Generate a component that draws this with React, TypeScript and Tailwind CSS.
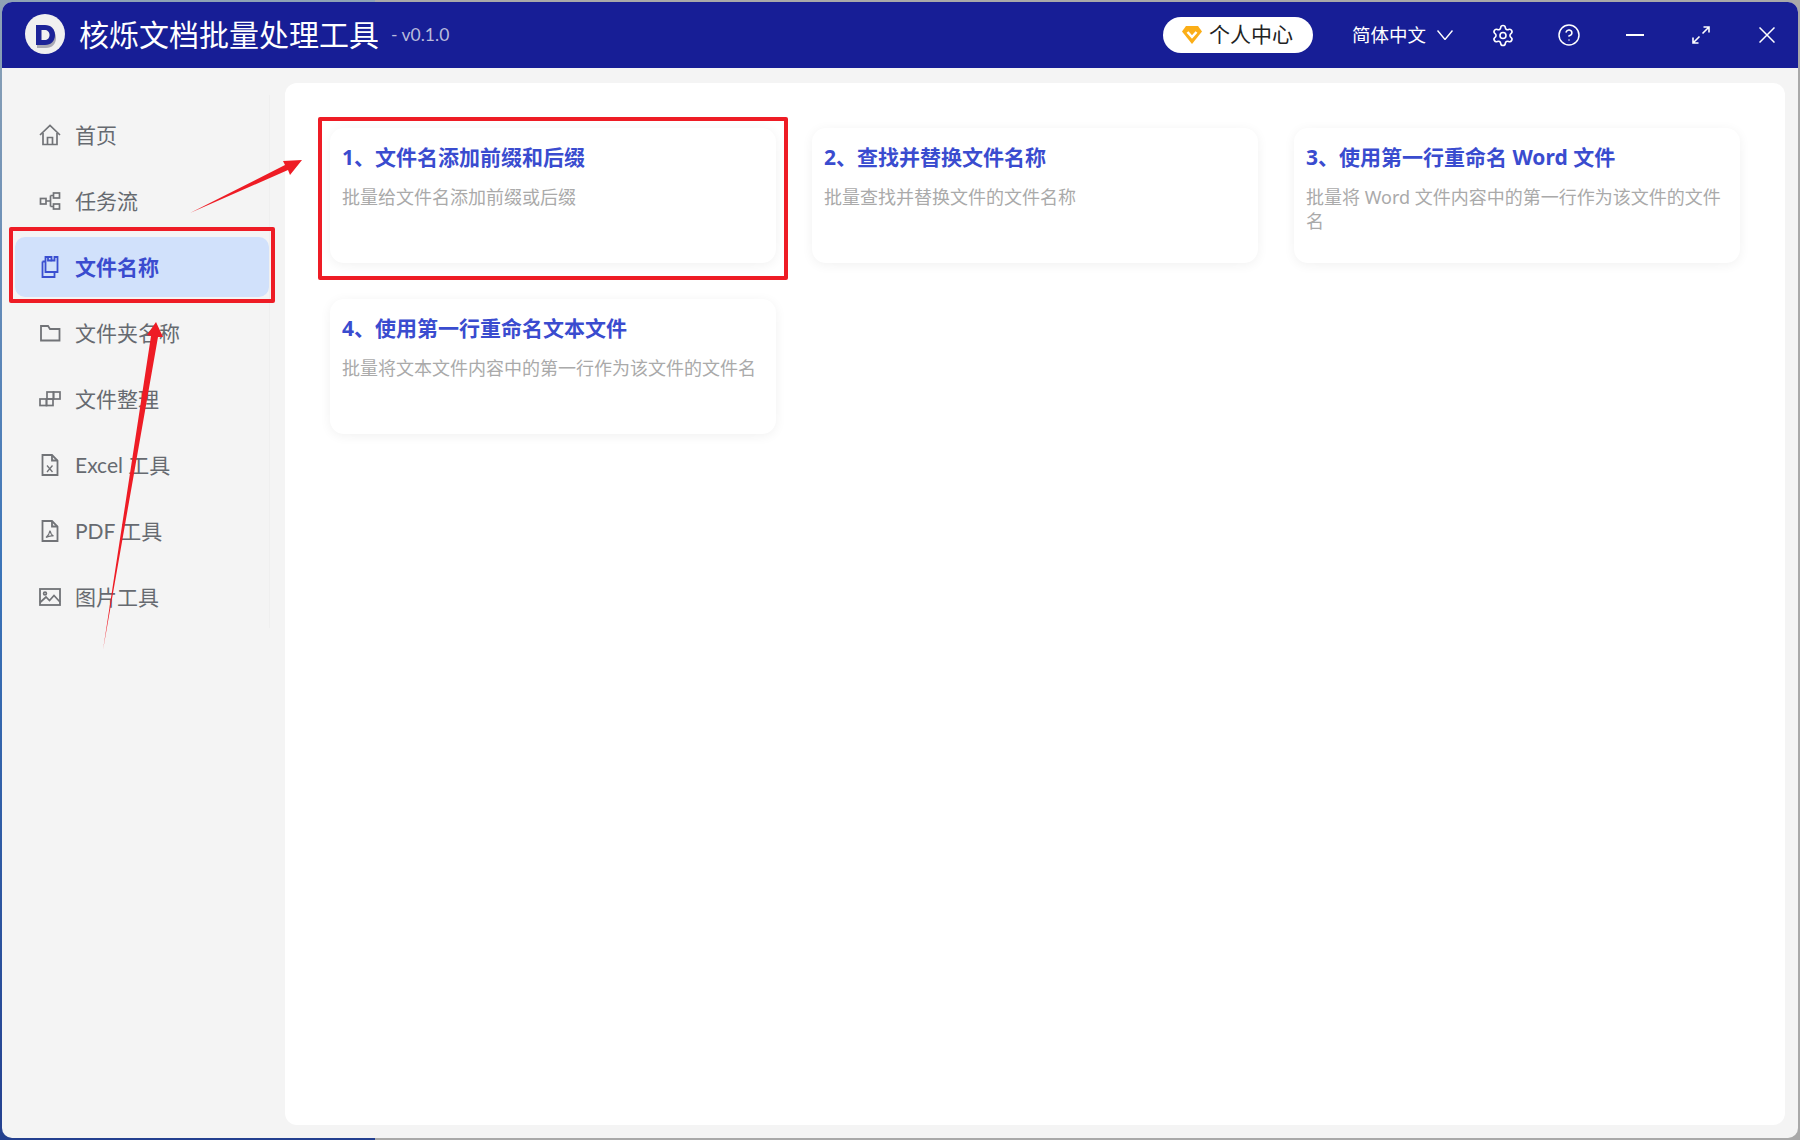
import React from 'react';
import { CircleHelp, Settings } from 'lucide-react';

const iconProps = {
  width: 22,
  height: 22,
  viewBox: '0 0 22 22',
  fill: 'none',
  stroke: 'currentColor',
  strokeWidth: 1.7,
};

const HomeIcon = () => (
  <svg {...iconProps}>
    <path d="M1 11 11 1.500 21 11" />
    <path d="M4 9v11.500h14V9" />
    <path d="M8.500 20.500v-7h5v7" />
  </svg>
);
const FlowIcon = () => (
  <svg {...iconProps}>
    <rect x="1.500" y="8.500" width="5.500" height="5.500" />
    <rect x="14.500" y="3" width="6" height="5" />
    <rect x="14.500" y="14" width="6" height="5" />
    <path d="M7 11h4.500M11.500 5.500V16.500M11.500 5.500h3M11.500 16.500h3" />
  </svg>
);
const FilesIcon = () => (
  <svg {...iconProps} strokeWidth={1.8}>
    <path d="M3.500 5.500h2.500M3.500 5.500v15.500h12v-5" />
    <path d="M6.500 1v15h12V1h-3v3.500h-3V1z" />
    <path d="M9 1v3.500h3.500" />
  </svg>
);
const FolderIcon = () => (
  <svg {...iconProps} strokeWidth={1.8}>
    <path d="M2 18.500V4h7l2 3h9.500v11.500z" />
  </svg>
);
const BlocksIcon = () => (
  <svg {...iconProps}>
    <rect x="1" y="11" width="6.500" height="6.500" />
    <rect x="7.500" y="11" width="6.500" height="6.500" />
    <rect x="8" y="4" width="6.500" height="7" />
    <rect x="14.500" y="4" width="6.500" height="7" />
  </svg>
);
const ExcelIcon = () => (
  <svg {...iconProps} strokeWidth={1.8}>
    <path d="M3.500 1h9.500l5.500 5.500V21h-15z" />
    <path d="M13 1v5.500h5.500" />
    <path d="M8 11.500l5.500 6.500M13.500 11.500 8 18" strokeWidth={1.3} />
  </svg>
);
const PdfIcon = () => (
  <svg {...iconProps} strokeWidth={1.8}>
    <path d="M3.500 1h9.500l5.500 5.500V21h-15z" />
    <path d="M13 1v5.500h5.500" />
    <path d="M11 10.500c-.5 3-2 5.500-4 7 2.500-1.500 5-2 7.500-1.500-2-1-3-3-3.500-5.500z" strokeWidth={1.2} />
  </svg>
);
const ImageIcon = () => (
  <svg {...iconProps}>
    <rect x="1" y="3" width="20" height="16" strokeWidth={1.8} />
    <circle cx="6" cy="7.500" r="1.400" />
    <path d="M1 16.500 7 11l3.500 3.500L15 9.500l6 6.500" />
  </svg>
);

const menu = [
  { label: '首页', Icon: HomeIcon },
  { label: '任务流', Icon: FlowIcon },
  { label: '文件名称', Icon: FilesIcon, active: true },
  { label: '文件夹名称', Icon: FolderIcon },
  { label: '文件整理', Icon: BlocksIcon },
  { label: 'Excel 工具', Icon: ExcelIcon },
  { label: 'PDF 工具', Icon: PdfIcon },
  { label: '图片工具', Icon: ImageIcon },
];

const cards = [
  { title: '1、文件名添加前缀和后缀', desc: '批量给文件名添加前缀或后缀' },
  { title: '2、查找并替换文件名称', desc: '批量查找并替换文件的文件名称' },
  { title: '3、使用第一行重命名 Word 文件', desc: '批量将 Word 文件内容中的第一行作为该文件的文件名' },
  { title: '4、使用第一行重命名文本文件', desc: '批量将文本文件内容中的第一行作为该文件的文件名' },
];

function Header() {
  return (
    <div className="flex h-[66px] items-center rounded-t-[10px] bg-[#171e96] pl-[23px] pr-[19px] text-white">
      <svg width="40" height="40" viewBox="0 0 40 40" className="mt-[-3px]">
        <circle cx="20" cy="20" r="20" fill="#f0f0f0" />
        <path d="M12 14h9c6 0 10 4 10 10s-4 10-10 10h-9z" fill="#a9a9b4" />
        <path d="M11 11h9c6 0 10 4 10 10s-4 10-10 10h-9z" fill="#1c2398" />
        <path d="M16.500 16h3c3 0 5 2 5 5s-2 5-5 5h-3z" fill="#f0f0f0" />
      </svg>
      <div className="ml-[14px] mt-[-1px] text-[30px] leading-none">核烁文档批量处理工具</div>
      <div className="ml-[12px] font-['Lato','Noto_Sans_CJK_SC',sans-serif] text-[17.500px] text-[#b9bbdc]">- v0.1.0</div>
      <div className="ml-auto flex h-[36px] w-[150px] items-center rounded-full bg-white pl-[19px] text-[#222]">
        <svg width="20" height="18" viewBox="0 0 20 18" className="shrink-0">
          <path d="M4 0h12l4 5.500L10 18 0 5.500z" fill="#fbae17" />
          <path d="M5.500 6 10 11l4.500-5" fill="none" stroke="#fff" strokeWidth="2.500" />
        </svg>
        <span className="ml-[7px] mt-[-2px] text-[21px] leading-none">个人中心</span>
      </div>
      <div className="ml-[39px] text-[18.500px]">简体中文</div>
      <svg width="16" height="10" viewBox="0 0 16 10" className="ml-[11px]" fill="none" stroke="currentColor" strokeWidth="1.400">
        <path d="M.5.500 8 9.500 15.500.500" />
      </svg>
      <div className="ml-[38px] flex items-center gap-[42px]">
        <div className="flex w-[24px] justify-center"><Settings size={25} strokeWidth={1.6} /></div>
        <div className="flex w-[24px] justify-center"><CircleHelp size={24} strokeWidth={1.5} /></div>
        <div className="flex w-[24px] justify-center">
          <div className="h-[2px] w-[18px] bg-white" />
        </div>
        <div className="flex w-[24px] justify-center">
          <svg width="18" height="18" viewBox="0 0 18 18" fill="none" stroke="currentColor" strokeWidth="1.600">
            <path d="M10.500 7.500 17 1M11.500 1H17v5.500M7.500 10.500 1 17M1 11.500V17h5.500" />
          </svg>
        </div>
        <div className="flex w-[24px] justify-center">
          <svg width="16" height="16" viewBox="0 0 16 16" fill="none" stroke="currentColor" strokeWidth="1.500">
            <path d="M.5.500l15 15M15.500.500l-15 15" />
          </svg>
        </div>
      </div>
    </div>
  );
}

function Sidebar() {
  return (
    <div className="mt-[27px] flex h-[533px] w-[268px] flex-col gap-[6px] border-r border-[#efefef] pl-[13px] pt-[10px] font-['Lato','Noto_Sans_CJK_SC',sans-serif]">
      {menu.map(({ label, Icon, active }) => (
        <div
          key={label}
          className={
            active
              ? 'flex h-[60px] shrink-0 items-center gap-[14px] rounded-[10px] bg-[#d1e1fb] pl-[24px] text-[21px] font-bold text-[#3a4ccf]'
              : 'flex h-[60px] shrink-0 items-center gap-[14px] pl-[24px] text-[21px] text-[#666a70]'
          }
        >
          <span className={active ? 'text-[#3a4fd0]' : 'text-[#717377]'}>
            <Icon />
          </span>
          {label}
        </div>
      ))}
    </div>
  );
}

function Cards() {
  return (
    <div className="mb-[13px] ml-[15px] mt-[15px] w-[1500px] rounded-[12px] bg-white">
      <div className="grid grid-cols-3 gap-[36px] p-[45px]">
        {cards.map((card) => (
          <div key={card.title} className="h-[135px] rounded-[14px] bg-white px-[12px] pt-[14px] shadow-[0_2px_12px_rgba(0,0,0,0.06)]">
            <div className="text-[21px] font-bold leading-[30px] text-[#3a4ccf]">{card.title}</div>
            <div className="mt-[13px] text-[18px] leading-[24px] text-[#aaaaaa]">{card.desc}</div>
          </div>
        ))}
      </div>
    </div>
  );
}

export default function App() {
  return (
    <div className="relative h-[1140px] w-[1800px] overflow-hidden bg-[#a9a9a9] p-[2px] font-['Noto_Sans','Noto_Sans_CJK_SC',sans-serif]">
      {/* desktop wallpaper peeking out behind the window */}
      <div className="absolute left-0 top-0 h-[1140px] w-[375px] bg-gradient-to-b from-[#8fa3b5] via-[#3b74b8] to-[#24408f]" />
      <div className="relative flex h-[1136px] flex-col rounded-[10px] bg-[#f4f4f4]">
        <Header />
        <div className="flex flex-1">
          <Sidebar />
          <Cards />
        </div>
      </div>

      {/* red annotations */}
      <div className="absolute left-[9px] top-[227px] h-[76px] w-[266px] rounded-[2px] border-[4px] border-[#ee1c25]" />
      <div className="absolute left-[318px] top-[117px] h-[163px] w-[470px] rounded-[2px] border-[4px] border-[#ee1c25]" />
      <svg className="absolute left-0 top-0" width="1800" height="1140" viewBox="0 0 1800 1140">
        <polygon points="190,213 285,165 283,161 302,160 290,175 288,170" fill="#ee1c25" />
        <polygon points="103,650 151,336 147,335 156,322 163,337 158,337" fill="#ee1c25" />
      </svg>
    </div>
  );
}
